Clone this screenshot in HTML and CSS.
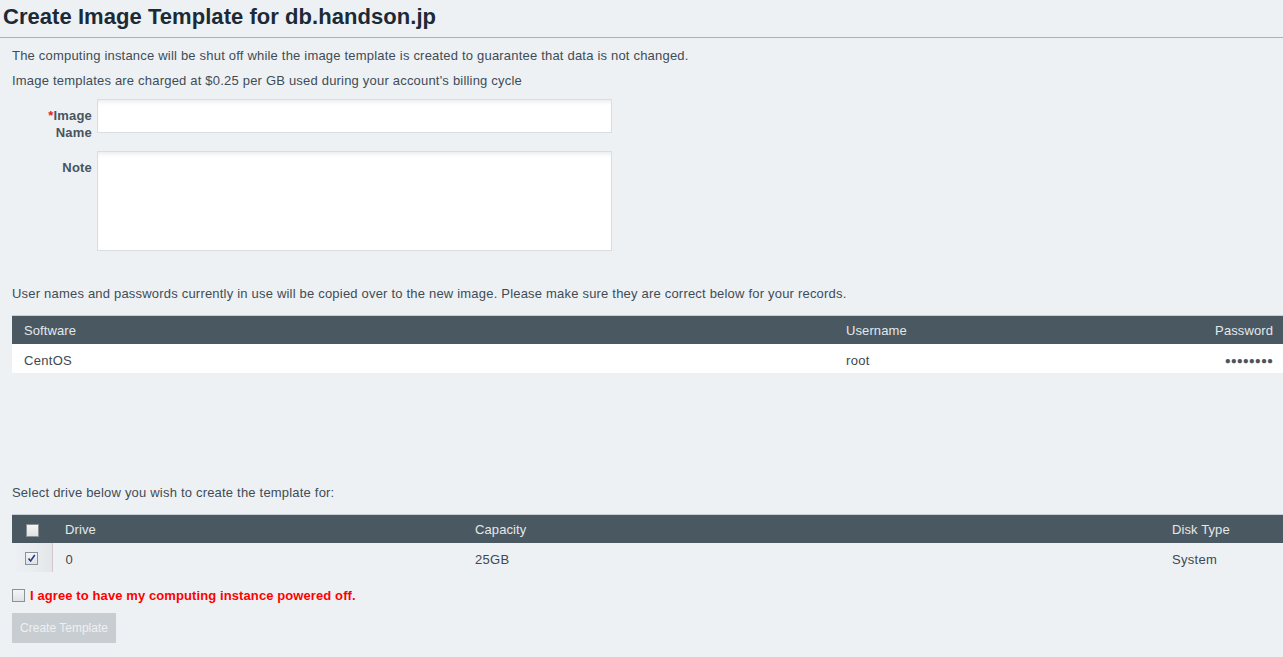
FILE: index.html
```html
<!DOCTYPE html>
<html>
<head>
<meta charset="utf-8">
<link rel="stylesheet" href="styles.css">
</head>
<body>
<h1 class="title">Create Image Template for db.handson.jp</h1>
<div class="content">
  <p class="info">The computing instance will be shut off while the image template is created to guarantee that data is not changed.</p>
  <p class="info">Image templates are charged at $0.25 per GB used during your account's billing cycle</p>
  <div class="form-row">
    <label class="label"><span class="req">*</span>Image Name</label>
    <input class="input" type="text">
  </div>
  <div class="form-row">
    <label class="label">Note</label>
    <textarea class="textarea"></textarea>
  </div>
  <p class="info users">User names and passwords currently in use will be copied over to the new image. Please make sure they are correct below for your records.</p>
  <table class="grid">
    <thead>
      <tr><th class="c-soft">Software</th><th class="c-user">Username</th><th class="c-pass">Password</th></tr>
    </thead>
    <tbody>
      <tr class="white"><td class="c-soft">CentOS</td><td class="c-user">root</td><td class="c-pass dots">●●●●●●●●</td></tr>
    </tbody>
  </table>
  <p class="info select">Select drive below you wish to create the template for:</p>
  <table class="grid drives">
    <thead>
      <tr><th class="c-chk"><span class="cb"></span></th><th class="c-drive">Drive</th><th class="c-cap">Capacity</th><th class="c-type">Disk Type</th></tr>
    </thead>
    <tbody>
      <tr><td class="c-chk chkcell"><span class="cb checked"><svg width="9" height="9" viewBox="0 0 9 9"><path d="M1.5 4.5 L3.6 7 L7.8 1" fill="none" stroke="#2a3a8c" stroke-width="1.6"/></svg></span></td><td class="c-drive">0</td><td class="c-cap">25GB</td><td class="c-type">System</td></tr>
    </tbody>
  </table>
  <div class="agree"><span class="cb"></span><span class="agree-text">I agree to have my computing instance powered off.</span></div>
  <button class="btn">Create Template</button>
</div>
</body>
</html>
```
FILE: styles.css
```css
html, body {
  margin: 0;
  padding: 0;
  background: #edf1f4;
  font-family: "Liberation Sans", Arial, sans-serif;
  color: #3f4c56;
  width: 1283px;
  overflow: hidden;
}
.title {
  margin: 0;
  padding: 4px 0 0 3px;
  box-sizing: border-box;
  font-size: 22px;
  font-weight: bold;
  color: #1c2a36;
  border-bottom: 1px solid #aab2b8;
  height: 38px;
  letter-spacing: 0.05px;
}
.content {
  padding: 0 0 0 12px;
}
.info {
  margin: 0;
  font-size: 13px;
  line-height: 25px;
  letter-spacing: 0.2px;
}
.info:first-child {
  margin-top: 5px;
}
.form-row {
  display: flex;
  align-items: flex-start;
  margin-bottom: 10px;
}
.form-row:first-of-type {
  margin-top: 6px;
}
.label {
  width: 85px;
  flex: none;
  text-align: right;
  font-size: 13px;
  font-weight: bold;
  color: #48545d;
  line-height: 17px;
  padding-top: 8px;
  padding-right: 5px;
  box-sizing: border-box;
  letter-spacing: 0.2px;
}
.req {
  color: #e0232a;
}
.input, .textarea {
  width: 515px;
  box-sizing: border-box;
  border: 1px solid #d9dee2;
  background: #fff;
  box-shadow: inset 0 4px 4px -2px rgba(0,0,0,0.08);
  margin: 0;
  outline: none;
  font-family: inherit;
  display: block;
}
.input {
  height: 34px;
}
.textarea {
  height: 100px;
  resize: none;
}
.users {
  margin-top: 30px;
  margin-bottom: 9px;
}
.grid {
  border-collapse: collapse;
  width: 1271px;
  font-size: 13px;
  table-layout: fixed;
}
.grid th {
  background: #4a5862;
  color: #e4e8eb;
  font-weight: normal;
  font-size: 13px;
  height: 28px;
  text-align: left;
  padding: 0;
  border-top: 1px solid #c9d0d5;
  letter-spacing: 0.1px;
}
.grid td {
  height: 25px;
  padding: 4px 0 0 0;
  color: #3c4852;
  letter-spacing: 0.3px;
}
.white td {
  background: #fff;
}
.c-soft { width: 822px; padding-left: 12px !important; }
.c-user { width: auto; }
.c-pass { width: 120px; text-align: right !important; padding-right: 10px !important; }
.grid td.dots { font-size: 10px; letter-spacing: 0; color: #4a5560; }
.select {
  margin-top: 107px;
  margin-bottom: 9px;
}
.c-chk { width: 40px; text-align: center !important; }
.grid td.chkcell { padding-top: 0; height: 29px; }
.c-drive { width: 410px; padding-left: 13px !important; }
.c-cap { width: 697px; }
.c-type { width: auto; }
.chkcell {
  border-right: 1px solid #d4c7cb;
  background: linear-gradient(to right, #edf1f4 0%, #e8ecef 60%, #e3e7ea 100%);
}
.cb {
  display: inline-block;
  width: 11px;
  height: 11px;
  border: 1px solid #8a9197;
  background: linear-gradient(#f4f5f6, #dfe2e5);
  vertical-align: middle;
  position: relative;
}
.cb.checked svg {
  position: absolute;
  left: 1px;
  top: 1px;
}
.agree {
  display: flex;
  align-items: center;
  margin-top: 16px;
  height: 14px;
}
.agree .cb {
  margin-right: 5px;
}
.agree-text {
  color: #ff0000;
  font-weight: bold;
  font-size: 13px;
  letter-spacing: 0.1px;
}
.btn {
  display: block;
  margin-top: 11px;
  width: 104px;
  height: 30px;
  border: none;
  background: #c8cdd1;
  color: #eef0f2;
  font-family: inherit;
  font-size: 12px;
  padding: 0;
}
```
